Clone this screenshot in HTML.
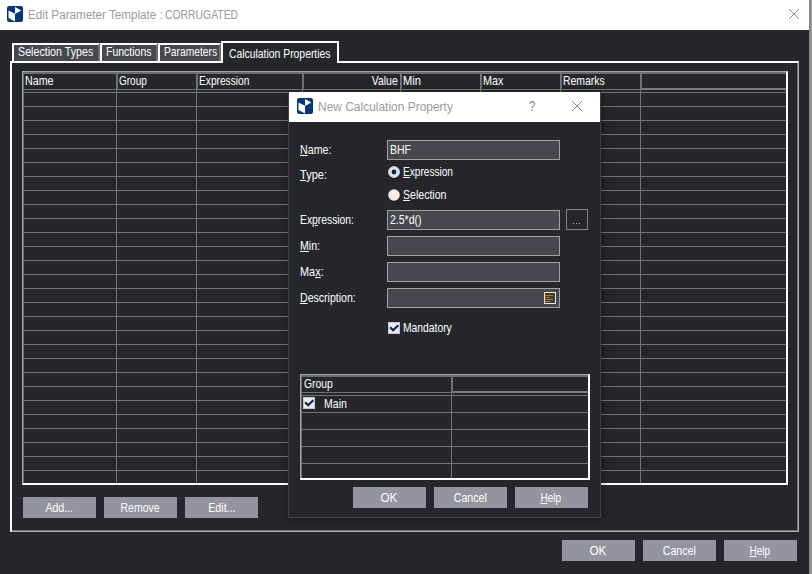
<!DOCTYPE html>
<html>
<head>
<meta charset="utf-8">
<title>Edit Parameter Template</title>
<style>
*{box-sizing:border-box;margin:0;padding:0}
html,body{width:812px;height:574px;overflow:hidden;background:#26272c}
body{position:relative;font-family:"Liberation Sans",sans-serif;font-size:12.4px;color:#fff}
.abs{position:absolute}
.t{position:absolute;white-space:nowrap;line-height:13px;color:#fff}
u{text-decoration:underline;text-underline-offset:1px}
#title{left:0;top:0;width:809px;height:30px;background:#fff}
#edge{left:809px;top:0;width:3px;height:574px;background:linear-gradient(90deg,#7c7c7c 0,#8e8e8e 55%,#a4a4a4 100%)}
.ttxt{font-size:12px;line-height:16px;color:#9a9a9a;transform-origin:0 0}
.btn{position:absolute;width:73px;height:21px;background:#93949d;color:#fff;text-align:center;line-height:22px;overflow:hidden}
.x{display:inline-block;transform:translate(var(--dx,0px),var(--dy,0px)) scaleX(var(--s,.86));transform-origin:0 50%;white-space:nowrap}
.btn .x{transform-origin:50% 50%}
.r .x{transform-origin:100% 50%}
/* tabs */
.tab{position:absolute;top:43px;height:18px;background:#47484e;border-left:2px solid #fff;border-top:2px solid #fff;border-right:2px solid #6e6e6e;line-height:15px;padding-left:4px;white-space:nowrap}
#panel{left:10px;top:61px;width:789px;height:471px;border-left:2px solid #fff;border-top:2px solid #fff;border-right:1px solid #b4b4b2;border-bottom:1px solid #b4b4b2;box-shadow:inset -1px -1px 0 #727272}
/* grid */
#grid{left:22px;top:71px;width:766px;height:414px;border-left:1px solid #a6a6a6;border-top:1px solid #a6a6a6;border-right:2px solid #fff;border-bottom:2px solid #fff;box-shadow:inset 1px 1px 0 #6e6e6e;
 background:
 repeating-linear-gradient(180deg,transparent 0,transparent 13px,#747474 13px,#747474 14px) 0 7px/100% 100% no-repeat}
.vl{position:absolute;top:72px;width:1px;height:411px;background:#747474}
.hc{position:absolute;top:73px;height:17px;border-left:1px solid #6e6e6e;border-top:1px solid #6e6e6e;border-bottom:1px solid #727272;background:#26272c;line-height:14px;padding-left:1px;white-space:nowrap}
/* dialog */
#dlg{left:288px;top:92px;width:313px;height:426px;background:#26272c;border-left:1px solid #3f4044;border-right:1px solid #3f4044;border-bottom:1px solid #3f4044;box-shadow:1px 2px 8px 0 rgba(0,0,0,.34)}
#dtitle{left:0;top:0;width:311px;height:30px;background:#fff}
.inp{position:absolute;left:98px;width:173px;height:20px;background:#47484f;border:1px solid #a2a2a2;line-height:18px;padding-left:2px}
</style>
</head>
<body>
<div id="title" class="abs"></div>
<div id="edge" class="abs"></div>
<svg class="abs" style="left:7px;top:6px" width="16" height="16" viewBox="0 0 16 16"><rect x="0" y="0" width="16" height="16" rx="2" fill="#04377a"/><path d="M1.5 4.5 L8 7.8 L8 15.4 L1.5 12 Z" fill="#fff"/><path d="M8 0.9 L14.3 4.5 L8 8.1 Z" fill="#fff"/></svg>
<div class="t ttxt" style="left:28px;top:7px;transform:scaleX(.973)">Edit Parameter Template :</div>
<div class="t ttxt" style="left:165px;top:7px;transform:scaleX(.865)">CORRUGATED</div>
<svg class="abs" style="left:788px;top:8px" width="12" height="12" viewBox="0 0 12 12"><path d="M1 1 L11 11 M11 1 L1 11" stroke="#8c8c8c" stroke-width="1" fill="none"/></svg>

<!-- tab panel -->
<div id="panel" class="abs"></div>
<div class="tab" style="left:12px;width:88px"><span class="x" style="--s:0.863">Selection Types</span></div>
<div class="tab" style="left:100px;width:58px"><span class="x" style="--s:0.847">Functions</span></div>
<div class="tab" style="left:158px;width:63px"><span class="x" style="--s:0.829">Parameters</span></div>
<div class="tab" style="left:221px;width:118px;top:41px;height:22px;background:#26272c;border-right:2px solid #fff;line-height:23px;padding-left:6px"><span class="x" style="--s:0.8375">Calculation Properties</span></div>

<!-- grid -->
<div id="grid" class="abs"></div>
<div class="vl" style="left:116px"></div>
<div class="vl" style="left:196px"></div>
<div class="vl" style="left:302px"></div>
<div class="vl" style="left:400px"></div>
<div class="vl" style="left:480px"></div>
<div class="vl" style="left:560px"></div>
<div class="vl" style="left:640px"></div>
<div class="hc" style="left:23px;width:93px"><span class="x" style="--s:0.8625">Name</span></div>
<div class="hc" style="left:117px;width:79px"><span class="x" style="--s:0.806">Group</span></div>
<div class="hc" style="left:197px;width:105px"><span class="x" style="--s:0.822">Expression</span></div>
<div class="hc r" style="left:303px;width:97px;text-align:right;padding-right:2px"><span class="x" style="--s:0.846">Value</span></div>
<div class="hc" style="left:401px;width:79px;padding-left:0.5px"><span class="x" style="--s:0.894">Min</span></div>
<div class="hc" style="left:481px;width:79px;padding-left:0.5px"><span class="x" style="--s:0.873">Max</span></div>
<div class="hc" style="left:561px;width:79px;padding-left:0"><span class="x" style="--s:0.842;--dx:.9px">Remarks</span></div>
<div class="hc" style="left:641px;width:145px;border-bottom:2px solid #7e7e7e"></div>

<div class="btn" style="left:23px;top:497px"><span class="x" style="--s:0.853">Add...</span></div>
<div class="btn" style="left:104px;top:497px"><span class="x" style="--s:0.849">Remove</span></div>
<div class="btn" style="left:185px;top:497px"><span class="x" style="--s:0.863">Edit...</span></div>

<div class="btn" style="left:562px;top:540px"><span class="x" style="--s:0.94;margin-left:-1.5px">OK</span></div>
<div class="btn" style="left:643px;top:540px"><span class="x" style="--s:0.86">Cancel</span></div>
<div class="btn" style="left:724px;top:540px"><span class="x" style="--s:0.811;margin-left:-1.5px"><u>H</u>elp</span></div>

<!-- dialog -->
<div id="dlg" class="abs">
  <div id="dtitle" class="abs"></div>
  <svg class="abs" style="left:8px;top:6px" width="16" height="16" viewBox="0 0 16 16"><rect x="0" y="0" width="16" height="16" rx="2" fill="#04377a"/><path d="M1.5 4.5 L8 7.8 L8 15.4 L1.5 12 Z" fill="#fff"/><path d="M8 0.9 L14.3 4.5 L8 8.1 Z" fill="#fff"/></svg>
  <div class="t ttxt" style="left:29px;top:7px;transform:scaleX(.996)">New Calculation Property</div>
  <div class="t" style="left:240px;top:6px;font-size:14.5px;line-height:16px;color:#858585;transform:scaleX(.78);transform-origin:0 0">?</div>
  <svg class="abs" style="left:282px;top:8px" width="12" height="12" viewBox="0 0 12 12"><path d="M1 1 L11 11 M11 1 L1 11" stroke="#8c8c8c" stroke-width="1" fill="none"/></svg>

  <div class="t" style="left:11px;top:52px"><span class="x" style="--s:0.86"><u>N</u>ame:</span></div>
  <div class="inp" style="top:48px"><span class="x" style="--s:0.842">BHF</span></div>
  <div class="t" style="left:11px;top:77px"><span class="x" style="--s:0.89"><u>T</u>ype:</span></div>
  <svg class="abs" style="left:99px;top:74px" width="12" height="12" viewBox="0 0 12 12"><circle cx="6" cy="6" r="5.8" fill="#e4e6ef"/><circle cx="6" cy="6" r="5.3" fill="none" stroke="#c9cbd6" stroke-width="1"/><circle cx="6" cy="6" r="2.4" fill="#0a2452"/></svg>
  <div class="t" style="left:114px;top:74px"><span class="x" style="--s:0.815"><u>E</u>xpression</span></div>
  <svg class="abs" style="left:99px;top:97px" width="12" height="12" viewBox="0 0 12 12"><circle cx="6" cy="6" r="5.8" fill="#f6ece0"/></svg>
  <div class="t" style="left:114px;top:97px"><span class="x" style="--s:0.852"><u>S</u>election</span></div>
  <div class="t" style="left:11px;top:122px"><span class="x" style="--s:0.833">Ex<u>p</u>ression:</span></div>
  <div class="inp" style="top:118px"><span class="x" style="--s:0.849">2.5*d()</span></div>
  <div class="abs" style="left:277px;top:117px;width:22px;height:21px;border:1px solid #848484"></div>
  <div class="abs" style="left:284px;top:131px;width:1px;height:1px;background:#bcbcbc;box-shadow:3px 0 0 #bcbcbc,6px 0 0 #bcbcbc"></div>
  <div class="t" style="left:11px;top:148px"><span class="x" style="--s:0.855"><u>M</u>in:</span></div>
  <div class="inp" style="top:144px"></div>
  <div class="t" style="left:11px;top:174px"><span class="x" style="--s:0.884">Ma<u>x</u>:</span></div>
  <div class="inp" style="top:170px"></div>
  <div class="t" style="left:11px;top:200px"><span class="x" style="--s:0.852"><u>D</u>escription:</span></div>
  <div class="inp" style="top:196px"></div>
  <svg class="abs" style="left:255px;top:200px" width="12" height="12" viewBox="0 0 12 12"><rect x="0.5" y="0.5" width="11" height="11" fill="#3b3c42" stroke="#efe9cf"/><path d="M1 3.5H9M1 5.5H6M1 7.5H9M1 9.5H6" stroke="#cc720c" stroke-width="1"/></svg>
  <svg class="abs" style="left:99px;top:230px" width="12" height="12" viewBox="0 0 12 12"><rect x="0.5" y="0.5" width="11" height="11" fill="#e9ebf3" stroke="#c4c6d0"/><path d="M2.1 5.2 L5.1 8.2 L10.3 3.3" stroke="#0a2452" stroke-width="2.1" fill="none"/></svg>
  <div class="t" style="left:114px;top:230px"><span class="x" style="--s:0.833">Mandatory</span></div>

  <!-- group grid -->
  <div class="abs" style="left:11px;top:282px;width:290px;height:106px;border-left:1px solid #a6a6a6;border-top:1px solid #a6a6a6;border-right:2px solid #fff;border-bottom:2px solid #fff;box-shadow:inset 1px 1px 0 #6e6e6e"></div>
  <div class="abs" style="left:162px;top:284px;width:1px;height:102px;background:#747474"></div>
  <div class="abs" style="left:12px;top:303px;width:287px;height:1px;background:#747474"></div>
  <div class="abs" style="left:12px;top:320px;width:287px;height:1px;background:#747474"></div>
  <div class="abs" style="left:12px;top:337px;width:287px;height:1px;background:#747474"></div>
  <div class="abs" style="left:12px;top:354px;width:287px;height:1px;background:#747474"></div>
  <div class="abs" style="left:12px;top:371px;width:287px;height:1px;background:#747474"></div>
  <div class="hc" style="left:12px;top:284px;width:150px;padding-left:2px"><span class="x" style="--s:0.838">Group</span></div>
  <div class="hc" style="left:163px;top:284px;width:136px;border-bottom:2px solid #7e7e7e"></div>
  <svg class="abs" style="left:14px;top:305px" width="12" height="12" viewBox="0 0 12 12"><rect x="0.5" y="0.5" width="11" height="11" fill="#e9ebf3" stroke="#c4c6d0"/><path d="M2.1 5.2 L5.1 8.2 L10.3 3.3" stroke="#0a2452" stroke-width="2.1" fill="none"/></svg>
  <div class="t" style="left:35px;top:306px"><span class="x" style="--s:0.85">Main</span></div>

  <div class="btn" style="left:64px;top:395px"><span class="x" style="--s:0.94;margin-left:-1.5px">OK</span></div>
  <div class="btn" style="left:145px;top:395px"><span class="x" style="--s:0.86">Cancel</span></div>
  <div class="btn" style="left:226px;top:395px"><span class="x" style="--s:0.811;margin-left:-1.5px"><u>H</u>elp</span></div>
</div>
</body>
</html>
